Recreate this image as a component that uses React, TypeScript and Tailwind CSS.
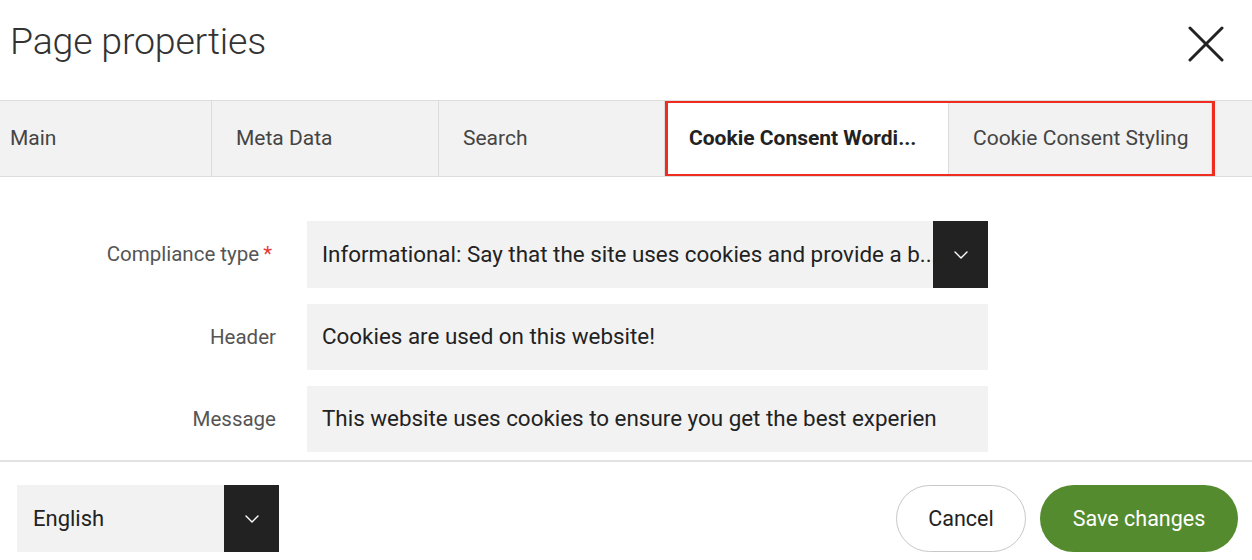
import React from "react";

const Chevron = () => (
  <svg width="14" height="8" viewBox="0 0 14 8" fill="none">
    <polyline points="1,1 7,7 13,1" stroke="#ffffff" strokeWidth="1.4" strokeLinecap="round" strokeLinejoin="round" />
  </svg>
);

export default function App() {
  const tabs = [
    { label: "Main", w: "w-[226px]", active: false },
    { label: "Meta Data", w: "w-[227px]", active: false },
    { label: "Search", w: "w-[226px]", active: false },
    { label: "Cookie Consent Wordi...", w: "w-[284px]", active: true },
    { label: "Cookie Consent Styling", w: "w-[263px]", active: false },
  ];
  return (
    <div
      className="w-[1252px] h-[560px] bg-white overflow-hidden text-[#333]"
      style={{ fontFamily: "Roboto, 'Noto Sans', sans-serif" }}
    >
      {/* Header */}
      <div className="h-[100px] flex items-start justify-between pl-[10px] pr-[28px]">
        <h1 className="mt-[18px] text-[37.5px] leading-[46px] font-light text-[#333] tracking-[-0.2px]">
          Page properties
        </h1>
        <svg className="mt-[26px]" width="36" height="36" viewBox="0 0 36 36" fill="none">
          <line x1="2" y1="2" x2="34" y2="34" stroke="#222" strokeWidth="3" strokeLinecap="round" />
          <line x1="34" y1="2" x2="2" y2="34" stroke="#222" strokeWidth="3" strokeLinecap="round" />
        </svg>
      </div>

      {/* Tabs */}
      <div className="relative h-[77px] bg-[#f2f2f2] border-y border-[#dcdcdc] overflow-hidden">
        <div className="flex h-full ml-[-14px]">
          {tabs.map((t, i) => (
            <div
              key={i}
              className={`${t.w} shrink-0 h-full flex items-center pl-[24px] text-[21px] whitespace-nowrap border-r border-[#dcdcdc] ${
                t.active ? "bg-white font-bold text-[#222]" : "text-[#444]"
              }`}
            >
              {t.label}
            </div>
          ))}
        </div>
        <div className="absolute left-[665px] top-[-1px] w-[550px] h-[77px] border-[3px] border-[#ee2d20] pointer-events-none" />
      </div>

      {/* Form */}
      <div className="pt-[44px] flex flex-col gap-[16px] h-[283px]">
        <div className="flex items-center">
          <div className="w-[276px] text-right text-[20.5px] text-[#555]">
            Compliance type<span className="text-[#e53935] ml-[4px] mr-[4px]">*</span>
          </div>
          <div className="ml-[31px] w-[681px] h-[67px] flex bg-[#f2f2f2]">
            <div className="flex-1 min-w-0 flex items-center pl-[15px] text-[22.4px] text-[#222] overflow-hidden whitespace-nowrap">
              <span>Informational: Say that the site uses cookies and provide a b...</span>
            </div>
            <div className="w-[55px] shrink-0 h-full bg-[#222] flex items-center justify-center">
              <Chevron />
            </div>
          </div>
        </div>
        <div className="flex items-center">
          <div className="w-[276px] text-right text-[20.5px] text-[#555]">Header</div>
          <div className="ml-[31px] w-[681px] h-[66px] flex items-center bg-[#f2f2f2] pl-[15px] text-[22.4px] text-[#222]">
            Cookies are used on this website!
          </div>
        </div>
        <div className="flex items-center">
          <div className="w-[276px] text-right text-[20.5px] text-[#555]">Message</div>
          <div className="ml-[31px] w-[681px] h-[66px] flex items-center bg-[#f2f2f2] pl-[15px] text-[22.4px] text-[#222] whitespace-nowrap">
            This website uses cookies to ensure you get the best experien
          </div>
        </div>
      </div>

      {/* Footer */}
      <div className="border-t-2 border-[#e2e2e2] h-[99px] flex items-start justify-between pt-[23px] pl-[17px] pr-[14px]">
        <div className="w-[262px] h-[67px] flex bg-[#f2f2f2]">
          <div className="flex-1 flex items-center pl-[16px] text-[22px] text-[#222]">English</div>
          <div className="w-[55px] h-full bg-[#222] flex items-center justify-center">
            <Chevron />
          </div>
        </div>
        <div className="flex gap-[14px]">
          <button className="w-[130px] h-[67px] pt-[2px] rounded-full border border-[#c8c8c8] bg-white text-[21.5px] text-[#222]">
            Cancel
          </button>
          <button className="w-[198px] h-[67px] pt-[2px] rounded-full bg-[#548b2e] text-white text-[21.5px]">
            Save changes
          </button>
        </div>
      </div>
    </div>
  );
}
